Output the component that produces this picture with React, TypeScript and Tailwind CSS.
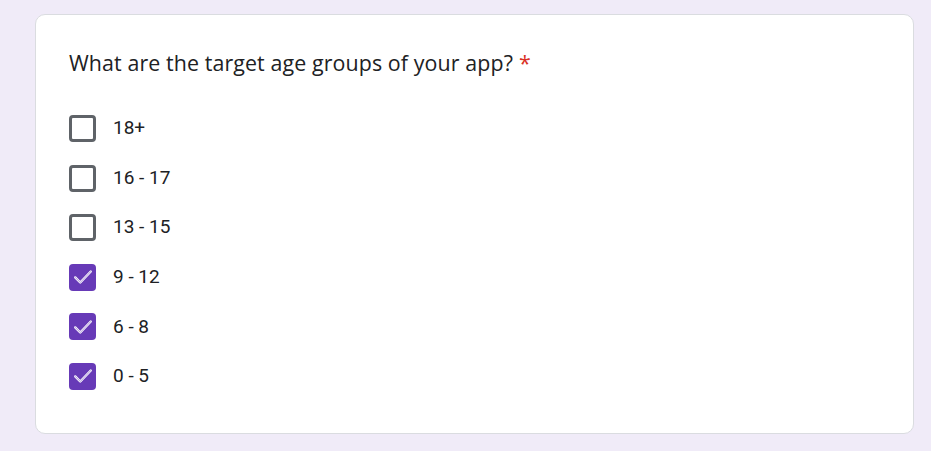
import React from 'react';

const options = [
  { label: '18+', checked: false },
  { label: '16 - 17', checked: false },
  { label: '13 - 15', checked: false },
  { label: '9 - 12', checked: true },
  { label: '6 - 8', checked: true },
  { label: '0 - 5', checked: true },
];

const CheckBox = ({ checked }: { checked: boolean }) =>
  checked ? (
    <div className="w-[27px] h-[27px] rounded-[4px] bg-[#673ab7] flex items-center justify-center">
      <svg width="22" height="22" viewBox="0 0 24 24" fill="none">
        <path d="M3.5 12.5l5.5 5.5L20.5 6" stroke="#ffffff" strokeWidth="2.6" strokeLinecap="round" strokeLinejoin="round" />
        <path d="M3.5 12.5l5.5 5.5L20.5 6" stroke="#8c6bc9" strokeWidth="0.8" strokeLinecap="round" strokeLinejoin="round" />
      </svg>
    </div>
  ) : (
    <div className="w-[27px] h-[27px] rounded-[4px] border-[3px] border-[#5f6368] bg-white" />
  );

export default function App() {
  return (
    <div className="w-[931px] h-[451px] bg-[#f0ebf8] pt-[14px] pl-[35px] pr-[17px]">
      <div className="h-[420px] bg-white border border-[#dadce0] rounded-[10px] pl-[33px] pt-[34px]">
        <h2 className="text-[21.4px] leading-[28px] text-[#202124] font-['Open_Sans',sans-serif] tracking-[0.1px]">
          What are the target age groups of your app?
          <span className="text-[#d93025] ml-[6px]">*</span>
        </h2>
        <div className="mt-[38px] flex flex-col gap-[22.6px]">
          {options.map((o) => (
            <div key={o.label} className="flex items-center h-[27px]">
              <CheckBox checked={o.checked} />
              <span className="ml-[17px] text-[19px] text-[#202124] font-['Roboto',sans-serif]">{o.label}</span>
            </div>
          ))}
        </div>
      </div>
    </div>
  );
}
